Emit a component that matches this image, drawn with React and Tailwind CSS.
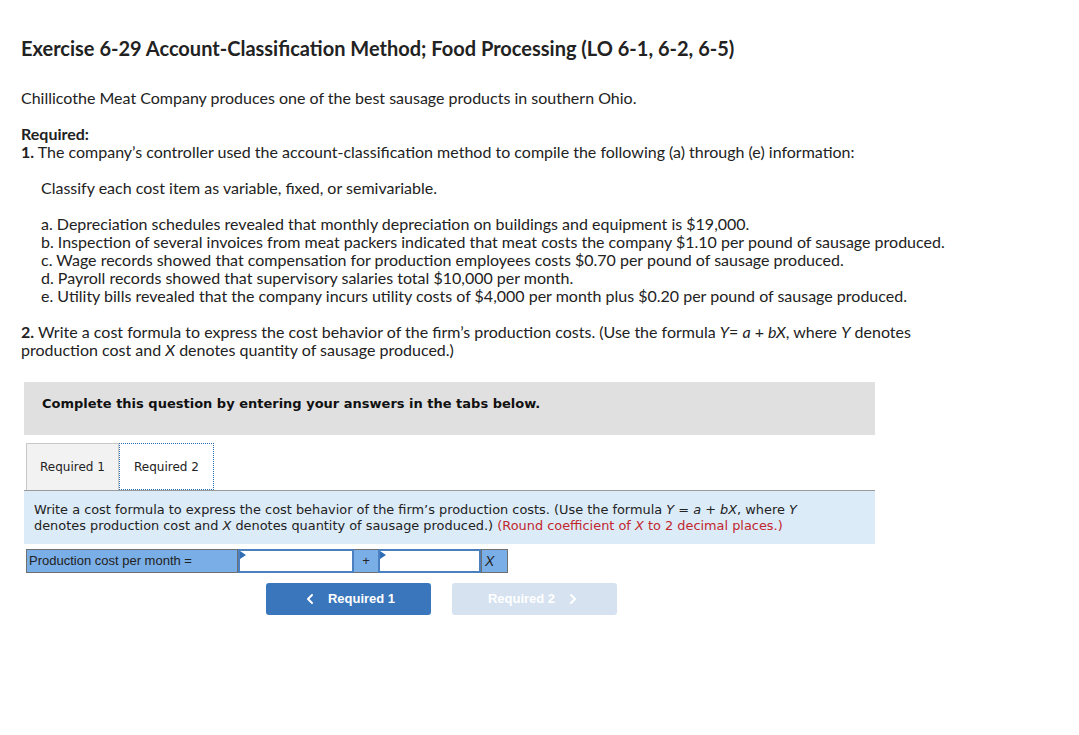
import React from "react";
import { ChevronLeft, ChevronRight } from "lucide-react";

const body = { fontFamily: "Lato, 'Open Sans', sans-serif" };

function Arrow() {
  return (
    <span className="absolute left-0 top-0 w-0 h-0 border-t-[4px] border-b-[4px] border-l-[6px] border-t-transparent border-b-transparent border-l-[#2e6db4]" />
  );
}

export default function App() {
  const items = [
    "a. Depreciation schedules revealed that monthly depreciation on buildings and equipment is $19,000.",
    "b. Inspection of several invoices from meat packers indicated that meat costs the company $1.10 per pound of sausage produced.",
    "c. Wage records showed that compensation for production employees costs $0.70 per pound of sausage produced.",
    "d. Payroll records showed that supervisory salaries total $10,000 per month.",
    "e. Utility bills revealed that the company incurs utility costs of $4,000 per month plus $0.20 per pound of sausage produced.",
  ];

  return (
    <div className="w-[1079px] min-h-[735px] bg-white text-[#222] pt-[36px] pl-[21px]" style={body}>
      <h1 className="text-[20px] font-bold leading-[24px] text-[#222]">
        Exercise 6-29 Account-Classification Method; Food Processing (LO 6-1, 6-2, 6-5)
      </h1>

      <p className="mt-[29px] text-[16px] leading-[18px]">
        Chillicothe Meat Company produces one of the best sausage products in southern Ohio.
      </p>

      <div className="mt-[18px] text-[16px] leading-[18px]">
        <div className="font-bold">Required:</div>
        <div>
          <b>1.</b> The company’s controller used the account-classification method to compile the following (a) through (e) information:
        </div>
        <div className="pl-[20px] mt-[18px]">Classify each cost item as variable, fixed, or semivariable.</div>
        <div className="pl-[20px] mt-[18px]">
          {items.map((t) => (
            <div key={t}>{t}</div>
          ))}
        </div>
        <div className="mt-[18px] w-[900px]">
          <b>2.</b> Write a cost formula to express the cost behavior of the firm’s production costs. (Use the formula <i>Y</i>= <i>a</i> + <i>bX</i>, where <i>Y</i>&nbsp;denotes production cost and <i>X</i>&nbsp;denotes quantity of sausage produced.)
        </div>
      </div>

      <div className="mt-[23px] ml-[3px] w-[851px]" style={{ fontFamily: "'DejaVu Sans', Verdana, sans-serif" }}>
        <div className="bg-[#e0e0e0] h-[53px] pt-[14px] pl-[18px] text-[13px] leading-[16px] font-bold text-[#111]">
          Complete this question by entering your answers in the tabs below.
        </div>

        <div className="mt-[8px] flex items-end border-b border-[#9a9a9a] pl-[2px]">
          <div className="h-[47px] w-[93px] bg-[#f2f2f2] border border-b-0 border-[#c8c8c8] flex items-center justify-center text-[12px] text-[#222]">
            Required 1
          </div>
          <div className="h-[47px] w-[95px] bg-white border border-dotted border-[#2e6db4] flex items-center justify-center text-[12px] text-[#222]">
            Required 2
          </div>
        </div>

        <div className="bg-[#dcebf8] h-[53px] pl-[10px] pt-[11px] text-[12.9px] leading-[16px] text-[#222]">
          Write a cost formula to express the cost behavior of the firm’s production costs. (Use the formula <i>Y</i> = <i>a</i> + <i>bX</i>, where <i>Y</i>
          <br />
          denotes production cost and <i>X</i> denotes quantity of sausage produced.){" "}
          <span className="text-[#c1272d]">
            (Round coefficient of <i>X</i> to 2 decimal places.)
          </span>
        </div>
      </div>

      <div className="mt-[5px] ml-[5px] flex h-[24px] text-[13px]" style={{ fontFamily: "'Liberation Sans', Arial, sans-serif" }}>
        <div className="w-[212px] bg-[#7aaee6] border border-[#6f6f6f] flex items-center pl-[2px] text-[#222]">
          Production cost per month =
        </div>
        <div className="relative w-[116px] bg-white border-2 border-[#4a80c0]">
          <Arrow />
        </div>
        <div className="w-[24px] bg-[#7aaee6] border-y border-[#6f6f6f] flex items-center justify-center text-[#222]">+</div>
        <div className="relative w-[103px] bg-white border-2 border-[#4a80c0]">
          <Arrow />
        </div>
        <div className="w-[27px] bg-[#7aaee6] border border-[#6f6f6f] flex items-center pl-[3px] text-[#222] italic text-[14px]">X</div>
      </div>

      <div className="mt-[10px] ml-[245px] flex gap-[21px]" style={{ fontFamily: "'Liberation Sans', Arial, sans-serif" }}>
        <button className="w-[165px] h-[32px] rounded-[3px] bg-[#3a76bb] text-white font-bold text-[13px] flex items-center justify-center gap-[10px]">
          <ChevronLeft size={16} strokeWidth={3} />
          Required 1
        </button>
        <button className="w-[165px] h-[32px] rounded-[3px] bg-[#d6e2f0] text-white font-bold text-[13px] flex items-center justify-center gap-[10px]">
          Required 2
          <ChevronRight size={16} strokeWidth={3} />
        </button>
      </div>
    </div>
  );
}
